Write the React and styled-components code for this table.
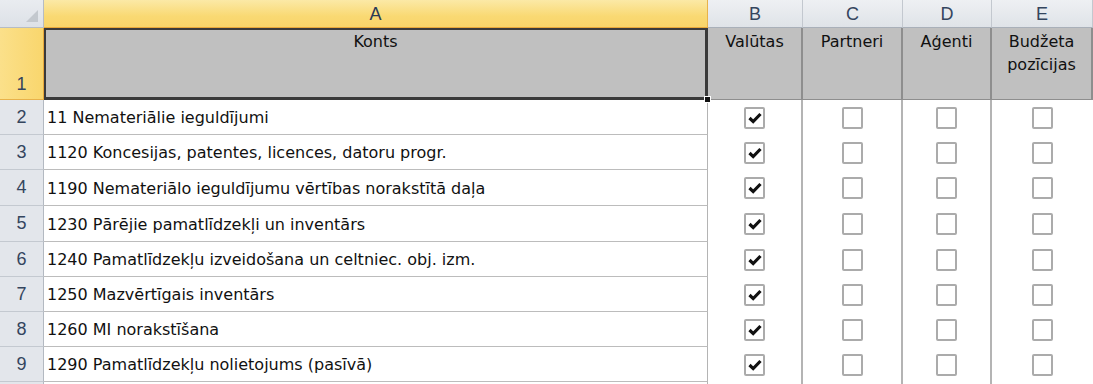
import React from "react";
import styled, { createGlobalStyle } from "styled-components";

const GlobalStyle = createGlobalStyle`
  html, body { margin: 0; padding: 0; background: #ffffff; }
  body { font-family: "DejaVu Sans", "Liberation Sans", sans-serif; }
`;

const Sheet = styled.div`
  display: grid;
  grid-template-columns: 44px 664px 95px 100px 89px 101px;
  grid-template-rows: 28px 72px 35px 35px 36px 36px 35px 35px 35px 35px 20px;
  width: 1093px;
  height: 384px;
  overflow: hidden;
  background: #ffffff;
`;

const Corner = styled.div`
  position: relative;
  box-sizing: border-box;
  background: linear-gradient(#e9ecf0, #dde1e7);
  border-right: 1px solid #b6bcc4;
  border-bottom: 1px solid #b6bcc4;
  &::after {
    content: "";
    position: absolute;
    right: 5px;
    bottom: 5px;
    width: 0;
    height: 0;
    border-left: 12px solid transparent;
    border-bottom: 12px solid #c3c8ce;
  }
`;

const ColHeader = styled.div`
  box-sizing: border-box;
  display: flex;
  align-items: center;
  justify-content: center;
  font-family: "Liberation Sans", Arial, sans-serif;
  font-size: 18px;
  color: ${(p) => (p.$selected ? "#2a3a55" : "#34455e")};
  background: ${(p) =>
    p.$selected
      ? "linear-gradient(#fbe9a6, #f9d973 60%, #f8d46a)"
      : "linear-gradient(#eef0f3, #dfe3e8)"};
  border-right: 1px solid ${(p) => (p.$selected ? "#e8b24a" : "#c3c8cf")};
  border-bottom: 1px solid ${(p) => (p.$selected ? "#e8a83a" : "#a9b0b9")};
  padding-top: 2px;
`;

const RowHeader = styled.div`
  box-sizing: border-box;
  display: flex;
  align-items: ${(p) => (p.$bottom ? "flex-end" : "center")};
  justify-content: center;
  font-family: "Liberation Sans", Arial, sans-serif;
  font-size: 18px;
  color: #34455e;
  padding-bottom: ${(p) => (p.$bottom ? "4px" : "0")};
  background: ${(p) => (p.$selected ? "linear-gradient(90deg, #fbe08a, #f9d66d)" : "#e3e6eb")};
  border-right: 1px solid ${(p) => (p.$selected ? "#e8a83a" : "#b3b9c1")};
  border-bottom: 1px solid ${(p) => (p.$selected ? "#e8b24a" : "#c4c9d0")};
`;

const TitleCell = styled.div`
  position: relative;
  box-sizing: border-box;
  background: #c0c0c0;
  border-right: 2px solid #8e8e8e;
  border-bottom: 1px solid #8e8e8e;
  font-size: 16px;
  line-height: 23px;
  color: #111;
  text-align: center;
  padding-top: 2px;
`;

const ActiveCell = styled(TitleCell)`
  border: 3px solid #3a3a3a;
  border-top-width: 2px;
  border-left-width: 2px;
  padding-top: 0;
  &::after {
    content: "";
    position: absolute;
    right: -6px;
    bottom: -6px;
    width: 5px;
    height: 5px;
    background: #111;
    border: 1px solid #ffffff;
    z-index: 2;
  }
`;

const AccountCell = styled.div`
  box-sizing: border-box;
  display: flex;
  align-items: center;
  padding-left: 3px;
  padding-top: 1px;
  font-size: 16px;
  color: #111;
  white-space: nowrap;
  overflow: hidden;
  background: #ffffff;
  border-right: 1px solid #b4b4b4;
  border-bottom: 1px solid #bcbcbc;
`;

const CheckCell = styled.div`
  box-sizing: border-box;
  display: flex;
  align-items: center;
  justify-content: center;
  background: #ffffff;
  border-right: ${(p) => (p.$last ? "0" : "2px solid #b4b4b4")};
`;

const Box = styled.div`
  box-sizing: border-box;
  width: 21px;
  height: 22px;
  border: 2px solid #ababab;
  border-radius: 2px;
  background: #ffffff;
  display: flex;
  align-items: center;
  justify-content: center;
`;

const Check = () => (
  <svg width="14" height="12" viewBox="0 0 14 12">
    <path d="M1.5 6 L5.2 9.6 L12.5 2" fill="none" stroke="#111" strokeWidth="3.2" strokeLinejoin="miter" />
  </svg>
);

const accounts = [
  "11 Nemateriālie ieguldījumi",
  "1120 Koncesijas, patentes, licences, datoru progr.",
  "1190 Nemateriālo ieguldījumu vērtības norakstītā daļa",
  "1230 Pārējie pamatlīdzekļi un inventārs",
  "1240 Pamatlīdzekļu izveidošana un celtniec. obj. izm.",
  "1250 Mazvērtīgais inventārs",
  "1260 MI norakstīšana",
  "1290 Pamatlīdzekļu nolietojums (pasīvā)",
];

export default function App() {
  return (
    <>
      <GlobalStyle />
      <Sheet>
        <Corner />
        <ColHeader $selected>A</ColHeader>
        <ColHeader>B</ColHeader>
        <ColHeader>C</ColHeader>
        <ColHeader>D</ColHeader>
        <ColHeader>E</ColHeader>

        <RowHeader $selected $bottom>1</RowHeader>
        <ActiveCell>Konts</ActiveCell>
        <TitleCell>Valūtas</TitleCell>
        <TitleCell>Partneri</TitleCell>
        <TitleCell>Aģenti</TitleCell>
        <TitleCell>Budžeta<br />pozīcijas</TitleCell>

        {accounts.map((name, i) => (
          <React.Fragment key={name}>
            <RowHeader>{i + 2}</RowHeader>
            <AccountCell>{name}</AccountCell>
            <CheckCell>
              <Box><Check /></Box>
            </CheckCell>
            <CheckCell><Box /></CheckCell>
            <CheckCell><Box /></CheckCell>
            <CheckCell $last><Box /></CheckCell>
          </React.Fragment>
        ))}

        <RowHeader />
        <AccountCell />
        <CheckCell />
        <CheckCell />
        <CheckCell />
        <CheckCell $last />
      </Sheet>
    </>
  );
}
